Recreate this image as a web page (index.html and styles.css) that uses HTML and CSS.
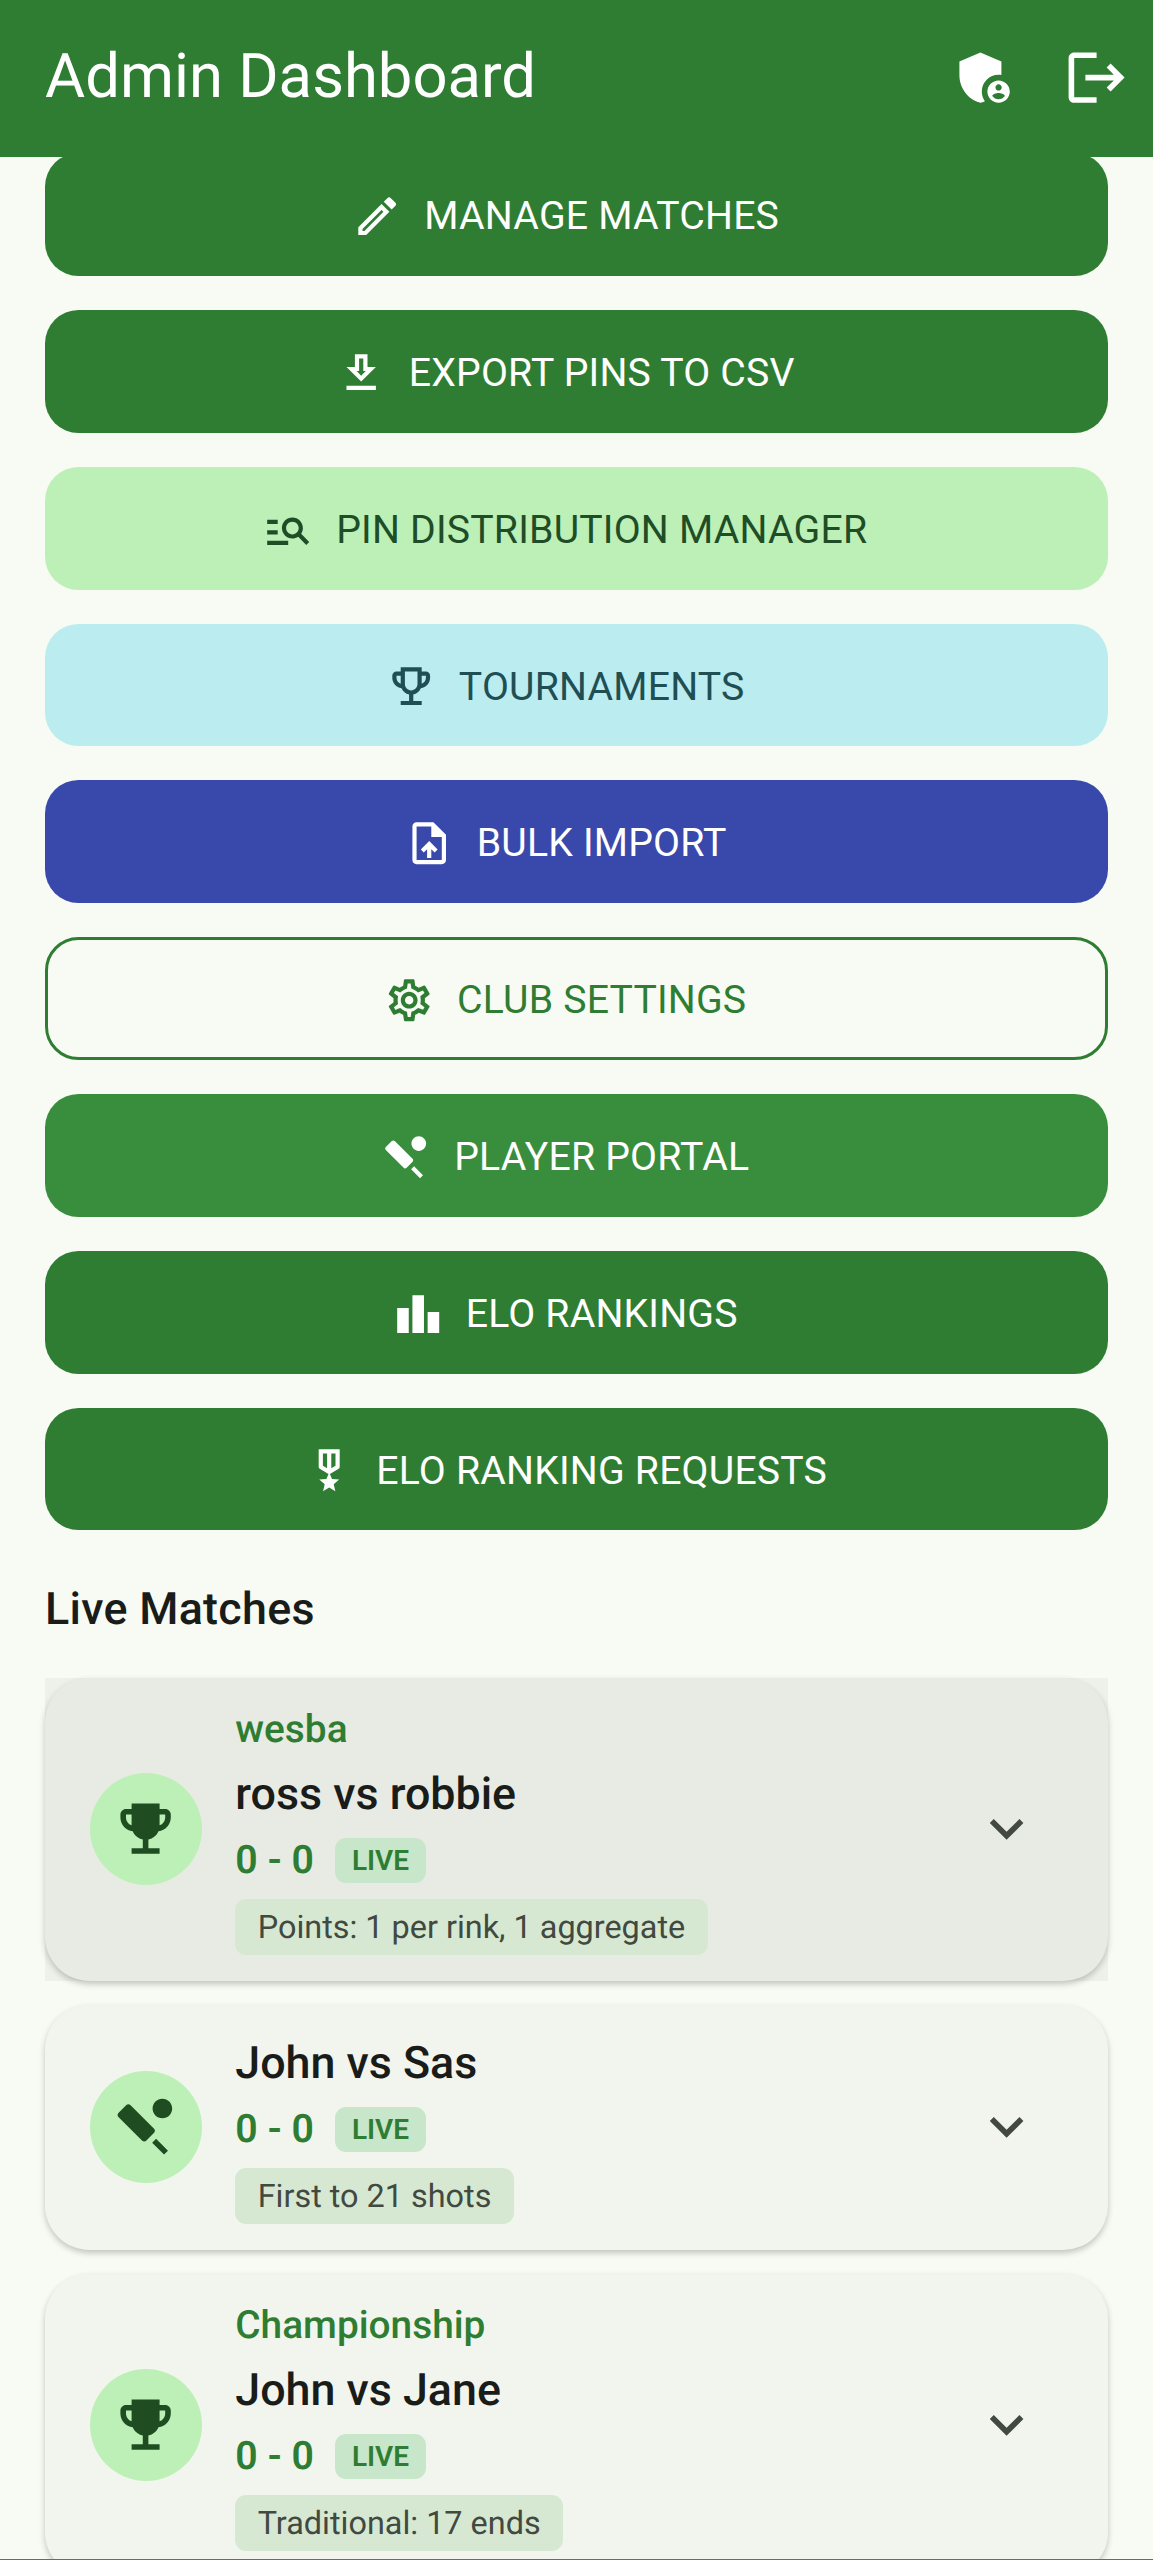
FILE: index.html
```html
<!DOCTYPE html>
<html lang="en">
<head>
<meta charset="utf-8">
<title>Admin Dashboard</title>
<link rel="stylesheet" href="styles.css">
</head>
<body>
<svg class="defs" aria-hidden="true">
  <symbol id="i-trophy" viewBox="0 0 24 24"><path d="M19 5h-2V3H7v2H5c-1.1 0-2 .9-2 2v1c0 2.55 1.92 4.63 4.39 4.94.63 1.5 1.98 2.63 3.61 2.96V19H7v2h10v-2h-4v-3.1c1.63-.33 2.98-1.46 3.61-2.96C19.08 12.63 21 10.55 21 8V7c0-1.1-.9-2-2-2zM5 8V7h2v3.82C5.84 10.4 5 9.3 5 8zm14 0c0 1.3-.84 2.4-2 2.82V7h2v1z"/></symbol>
  <symbol id="i-cricket" viewBox="0 0 24 24"><path d="M15.04 12.79l-8.5-8.5C6.35 4.1 6.09 4 5.83 4s-.51.1-.7.29L2.29 7.13c-.39.39-.39 1.03 0 1.42l8.5 8.5c.2.2.45.29.71.29.26 0 .51-.1.71-.29l2.83-2.83c.39-.4.39-1.04 0-1.43zM14.34 17.76l1.41-1.41 4.25 4.24-1.41 1.41zM18 2.01c-1.93 0-3.5 1.57-3.5 3.5s1.57 3.5 3.5 3.5 3.5-1.57 3.5-3.5-1.57-3.5-3.5-3.5z"/></symbol>
  <symbol id="i-chevron" viewBox="0 0 24 24"><path d="M16.59 8.59L12 13.17 7.41 8.59 6 10l6 6 6-6z"/></symbol>
</svg>

<header class="appbar">
  <h1 class="appbar-title">Admin Dashboard</h1>
  <div class="appbar-actions">
    <button class="icon-btn" type="button" aria-label="Admin">
      <svg class="icon-24" viewBox="0 0 24 24"><path fill-rule="evenodd" d="M17 11c.34 0 .67.04 1 .09V6.27L10.5 3 3 6.27v4.91c0 4.54 3.2 8.79 7.5 9.82.55-.13 1.08-.32 1.6-.55-.69-.98-1.1-2.17-1.1-3.45 0-3.31 2.69-6 6-6zM17 13c-2.21 0-4 1.79-4 4s1.79 4 4 4 4-1.79 4-4-1.79-4-4-4zm0 1.38c.62 0 1.12.51 1.12 1.12s-.51 1.12-1.12 1.12-1.12-.51-1.12-1.12.5-1.12 1.12-1.12zm0 5.37c-.93 0-1.74-.46-2.24-1.17.05-.72 1.51-1.08 2.24-1.08s2.19.36 2.24 1.08c-.5.71-1.31 1.17-2.24 1.17z"/></svg>
    </button>
    <button class="icon-btn" type="button" aria-label="Log out">
      <svg class="icon-24" viewBox="0 0 24 24"><path d="M17 7l-1.41 1.41L18.17 11H8v2h10.17l-2.58 2.58L17 17l5-5zM4 5h8V3H4c-1.1 0-2 .9-2 2v14c0 1.1.9 2 2 2h8v-2H4V5z"/></svg>
    </button>
  </div>
</header>

<main class="content">
  <nav class="actions">
    <button class="action action-primary" type="button">
      <svg class="icon-18" viewBox="0 0 24 24"><path d="M14.06 9.02l.92.92L5.92 19H5v-.92l9.06-9.06M17.66 3c-.25 0-.51.1-.7.29l-1.83 1.83 3.75 3.75 1.83-1.83c.39-.39.39-1.02 0-1.41l-2.34-2.34c-.2-.2-.45-.29-.71-.29zm-3.6 3.19L3 17.25V21h3.75L17.81 9.94l-3.75-3.75z"/></svg>
      <span>MANAGE MATCHES</span>
    </button>
    <button class="action action-primary" type="button">
      <svg class="icon-18" viewBox="0 0 24 24"><path d="M19 9h-4V3H9v6H5l7 7 7-7zm-8 2V5h2v6h1.17L12 13.17 9.83 11H11zm-6 7h14v2H5z"/></svg>
      <span>EXPORT PINS TO CSV</span>
    </button>
    <button class="action action-mint" type="button">
      <svg class="icon-18" viewBox="0 0 24 24"><path d="M7 9H2V7h5v2zm0 3H2v2h5v-2zm13.59 7l-3.83-3.83c-.8.52-1.74.83-2.76.83-2.76 0-5-2.24-5-5s2.24-5 5-5 5 2.24 5 5c0 1.02-.31 1.96-.83 2.75L22 17.59 20.59 19zM17 11c0-1.65-1.35-3-3-3s-3 1.35-3 3 1.35 3 3 3 3-1.35 3-3zM2 19h10v-2H2v2z"/></svg>
      <span>PIN DISTRIBUTION MANAGER</span>
    </button>
    <button class="action action-aqua" type="button">
      <svg class="icon-18" viewBox="0 0 24 24"><path d="M19 5h-2V3H7v2H5c-1.1 0-2 .9-2 2v1c0 2.55 1.92 4.63 4.39 4.94.63 1.5 1.98 2.63 3.61 2.96V19H7v2h10v-2h-4v-3.1c1.63-.33 2.98-1.46 3.61-2.96C19.08 12.63 21 10.55 21 8V7c0-1.1-.9-2-2-2zM5 8V7h2v3.82C5.84 10.4 5 9.3 5 8zm7 6c-1.65 0-3-1.35-3-3V5h6v6c0 1.65-1.35 3-3 3zm7-6c0 1.3-.84 2.4-2 2.82V7h2v1z"/></svg>
      <span>TOURNAMENTS</span>
    </button>
    <button class="action action-indigo" type="button">
      <svg class="icon-18" viewBox="0 0 24 24"><path d="M14 2H6c-1.1 0-1.99.9-1.99 2L4 20c0 1.1.89 2 1.99 2H18c1.1 0 2-.9 2-2V8l-6-6zm4 18H6V4h7v5h5v11zM8 15.01l1.41 1.41L11 14.84V19h2v-4.16l1.59 1.59L16 15.01 12.01 11 8 15.01z"/></svg>
      <span>BULK IMPORT</span>
    </button>
    <button class="action action-outline" type="button">
      <svg class="icon-18" viewBox="0 0 24 24"><path d="M19.43 12.98c.04-.32.07-.64.07-.98 0-.34-.03-.66-.07-.98l2.11-1.65c.19-.15.24-.42.12-.64l-2-3.46c-.09-.16-.26-.25-.44-.25-.06 0-.12.01-.17.03l-2.49 1c-.52-.4-1.08-.73-1.69-.98l-.38-2.65C14.46 2.18 14.25 2 14 2h-4c-.25 0-.46.18-.49.42l-.38 2.65c-.61.25-1.17.59-1.69.98l-2.49-1c-.06-.02-.12-.03-.18-.03-.17 0-.34.09-.43.25l-2 3.46c-.13.22-.07.49.12.64l2.11 1.65c-.04.32-.07.65-.07.98 0 .33.03.66.07.98l-2.11 1.65c-.19.15-.24.42-.12.64l2 3.46c.09.16.26.25.44.25.06 0 .12-.01.17-.03l2.49-1c.52.4 1.08.73 1.69.98l.38 2.65c.03.24.24.42.49.42h4c.25 0 .46-.18.49-.42l.38-2.65c.61-.25 1.17-.59 1.69-.98l2.49 1c.06.02.12.03.18.03.17 0 .34-.09.43-.25l2-3.46c.12-.22.07-.49-.12-.64l-2.11-1.65zm-1.98-1.71c.04.31.05.52.05.73 0 .21-.02.43-.05.73l-.14 1.13.89.7 1.08.84-.7 1.21-1.27-.51-1.04-.42-.9.68c-.43.32-.84.56-1.25.73l-1.06.43-.16 1.13-.2 1.35h-1.4l-.19-1.35-.16-1.13-1.06-.43c-.43-.18-.83-.41-1.23-.71l-.91-.7-1.06.43-1.27.51-.7-1.21 1.08-.84.89-.7-.14-1.13c-.03-.31-.05-.54-.05-.74s.02-.43.05-.73l.14-1.13-.89-.7-1.08-.84.7-1.21 1.27.51 1.04.42.9-.68c.43-.32.84-.56 1.25-.73l1.06-.43.16-1.13.2-1.35h1.39l.19 1.35.16 1.13 1.06.43c.43.18.83.41 1.23.71l.91.7 1.06-.43 1.27-.51.7 1.21-1.07.85-.89.7.14 1.13zM12 8c-2.21 0-4 1.79-4 4s1.79 4 4 4 4-1.79 4-4-1.79-4-4-4zm0 6c-1.1 0-2-.9-2-2s.9-2 2-2 2 .9 2 2-.9 2-2 2z"/></svg>
      <span>CLUB SETTINGS</span>
    </button>
    <button class="action action-leaf" type="button">
      <svg class="icon-18"><use href="#i-cricket"/></svg>
      <span>PLAYER PORTAL</span>
    </button>
    <button class="action action-primary" type="button">
      <svg class="icon-18" viewBox="0 0 24 24"><path d="M7.5 21H2V9h5.5v12zm7.25-18h-5.5v18h5.5V3zM22 11h-5.5v10H22V11z"/></svg>
      <span>ELO RANKINGS</span>
    </button>
    <button class="action action-primary" type="button">
      <svg class="icon-18" viewBox="0 0 24 24"><path d="M17 10.43V2H7v8.43c0 .35.18.68.49.86l4.18 2.51-.99 2.34-3.41.29 2.59 2.24L9.07 22 12 20.23 14.93 22l-.78-3.33 2.59-2.24-3.41-.29-.99-2.34 4.18-2.51c.3-.18.48-.5.48-.86zm-6 .64l-2-1.2V4h2v7.07zm4-1.2l-2 1.2V4h2v5.87z"/></svg>
      <span>ELO RANKING REQUESTS</span>
    </button>
  </nav>

  <section class="live">
    <h2 class="live-title">Live Matches</h2>
    <div class="match-list">
      <div class="match-slot match-slot-active">
        <article class="match match-active">
          <div class="match-avatar"><svg class="avatar-icon"><use href="#i-trophy"/></svg></div>
          <div class="match-body">
            <p class="match-event">wesba</p>
            <p class="match-name">ross vs robbie</p>
            <div class="match-score-row"><span class="match-score">0 - 0</span><span class="badge-live">LIVE</span></div>
            <span class="match-format">Points: 1 per rink, 1 aggregate</span>
          </div>
          <svg class="match-chevron"><use href="#i-chevron"/></svg>
        </article>
      </div>
      <div class="match-slot">
        <article class="match">
          <div class="match-avatar"><svg class="avatar-icon"><use href="#i-cricket"/></svg></div>
          <div class="match-body">
            <p class="match-name">John vs Sas</p>
            <div class="match-score-row"><span class="match-score">0 - 0</span><span class="badge-live">LIVE</span></div>
            <span class="match-format">First to 21 shots</span>
          </div>
          <svg class="match-chevron"><use href="#i-chevron"/></svg>
        </article>
      </div>
      <div class="match-slot">
        <article class="match">
          <div class="match-avatar"><svg class="avatar-icon"><use href="#i-trophy"/></svg></div>
          <div class="match-body">
            <p class="match-event">Championship</p>
            <p class="match-name">John vs Jane</p>
            <div class="match-score-row"><span class="match-score">0 - 0</span><span class="badge-live">LIVE</span></div>
            <span class="match-format">Traditional: 17 ends</span>
          </div>
          <svg class="match-chevron"><use href="#i-chevron"/></svg>
        </article>
      </div>
    </div>
  </section>
</main>
<div class="screen-edge"></div>
</body>
</html>
```

FILE: styles.css
```css
* { box-sizing: border-box; }

html, body { margin: 0; padding: 0; }

body {
  position: relative;
  display: flex;
  flex-direction: column;
  width: 1153px;
  height: 2560px;
  overflow: hidden;
  background: #f7fbf3;
  color: #1a1c19;
  font-family: Roboto, "Noto Sans", sans-serif;
  text-rendering: geometricPrecision;
}

.defs { display: none; }

.appbar {
  position: relative;
  z-index: 2;
  flex: none;
  display: flex;
  align-items: flex-start;
  justify-content: space-between;
  height: 156.8px;
  padding-left: 45px;
  background: #2e7d32;
  color: #fff;
}

.appbar-title {
  margin: 0;
  font-size: 61.6px;
  font-weight: 400;
  line-height: 155px;
}

.appbar-actions { display: flex; padding-top: 22px; }

.icon-btn {
  display: flex;
  align-items: center;
  justify-content: center;
  width: 112px;
  height: 112px;
  padding: 0;
  border: 0;
  background: none;
  color: inherit;
}

.icon-24 { width: 67.2px; height: 67.2px; fill: currentColor; }

.content {
  flex: 1;
  min-height: 0;
  padding: 0 45px;
}

.actions {
  display: flex;
  flex-direction: column;
  gap: 34px;
  margin-top: -3.5px;
}

.action {
  display: flex;
  align-items: center;
  justify-content: center;
  gap: 22.4px;
  width: 100%;
  height: 122.8px;
  padding: 3px 67.2px 0 44.8px;
  border: 0;
  border-radius: 33.6px;
  font-family: inherit;
  font-size: 39.2px;
  font-weight: 400;
  letter-spacing: 0.2px;
}

.icon-18 { flex: none; width: 50.4px; height: 50.4px; fill: currentColor; }

.action-primary { background: #2e7d32; color: #fff; }
.action-mint { background: #bcf0b6; color: #1f4d27; }
.action-aqua { background: #bbecef; color: #1f4f54; }
.action-indigo { background: #3949ab; color: #fff; }
.action-outline { background: transparent; border: 3px solid #2e7d32; color: #2e7d32; }
.action-leaf { background: #388e3c; color: #fff; }

.live { padding-top: 45px; }

.live-title {
  margin: 0;
  font-size: 44.8px;
  font-weight: 500;
  letter-spacing: 0.3px;
  line-height: 67px;
}

.match-list {
  display: flex;
  flex-direction: column;
  gap: 23.5px;
  margin-top: 35.5px;
}

.match-slot-active { background: #eef1ea; }

.match {
  display: flex;
  align-items: center;
  padding: 24px 0 26px 44.8px;
  border-radius: 44.8px;
  background: #f2f5ee;
  box-shadow: 0 3px 6px rgba(0, 0, 0, 0.22);
}

.match-active { background: #e8ebe4; }

.match-avatar {
  flex: none;
  display: flex;
  align-items: center;
  justify-content: center;
  width: 112px;
  height: 112px;
  border-radius: 50%;
  background: #bcf0b6;
  color: #1f4d21;
}

.avatar-icon { width: 67.2px; height: 67.2px; fill: currentColor; }

.match-body {
  flex: 1;
  min-width: 0;
  display: flex;
  flex-direction: column;
  align-items: flex-start;
  padding-left: 33.5px;
}

.match-event {
  margin: 0 0 2px;
  color: #2e7d32;
  font-size: 38.8px;
  font-weight: 500;
  line-height: 56px;
}

.match-name {
  margin: 0 0 11.5px;
  font-size: 44.8px;
  font-weight: 500;
  line-height: 67px;
}

.match-score-row {
  display: flex;
  align-items: center;
  gap: 21px;
  margin-bottom: 16px;
}

.match-score {
  color: #2e7d32;
  font-size: 39.2px;
  font-weight: 600;
  line-height: 45px;
}

.badge-live {
  padding: 0 17px;
  border-radius: 11.2px;
  background: #c8e6c9;
  color: #2e7d32;
  font-size: 28px;
  font-weight: 600;
  line-height: 45px;
}

.match-format {
  padding: 0 22.4px;
  border-radius: 11.2px;
  background: #d6e8d2;
  color: #424940;
  font-size: 32.4px;
  line-height: 56px;
}

.match-chevron {
  flex: none;
  width: 67.2px;
  height: 67.2px;
  margin-right: 67.4px;
  fill: #424940;
}

.screen-edge {
  position: absolute;
  left: 0;
  right: 0;
  bottom: 0;
  z-index: 3;
  height: 1.5px;
  background: #4f7d58;
}
```
